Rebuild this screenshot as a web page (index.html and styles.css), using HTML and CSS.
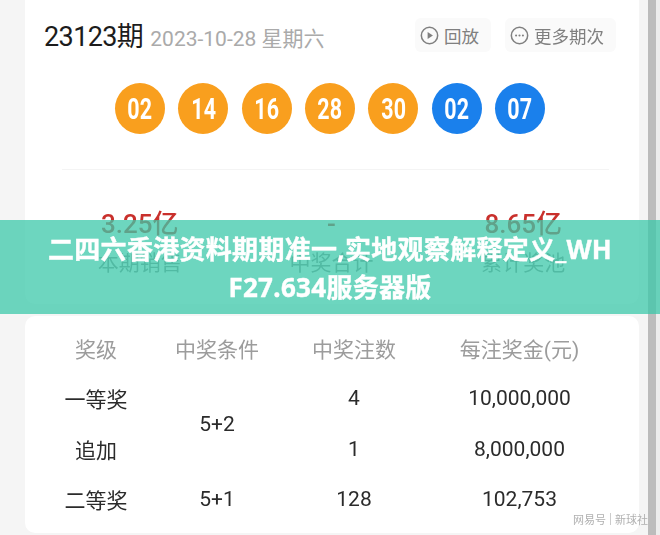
FILE: index.html
```html
<!DOCTYPE html>
<html lang="zh-CN">
<head>
<meta charset="utf-8">
<title>二四六香港资料期期准一</title>
<link rel="stylesheet" href="styles.css">
</head>
<body>
<div class="page">
  <div class="content">
    <section class="card draw">
      <header class="draw-head">
        <div class="draw-title"><span class="issue">23123期</span><span class="date">2023-10-28 星期六</span></div>
        <div class="actions">
          <span class="action">
            <svg class="icon" viewBox="0 0 20 20"><circle cx="10" cy="10" r="8.6"/><path class="fill" d="M8 6.2v7.6l5.6-3.8z"/></svg>回放
          </span>
          <span class="action">
            <svg class="icon" viewBox="0 0 20 20"><circle cx="10" cy="10" r="8.6"/><circle class="fill" cx="6.4" cy="10" r="1.1"/><circle class="fill" cx="10" cy="10" r="1.1"/><circle class="fill" cx="13.6" cy="10" r="1.1"/></svg>更多期次
          </span>
        </div>
      </header>
      <div class="balls">
        <span class="ball orange"><span>02</span></span>
        <span class="ball orange"><span>14</span></span>
        <span class="ball orange"><span>16</span></span>
        <span class="ball orange"><span>28</span></span>
        <span class="ball orange"><span>30</span></span>
        <span class="ball blue"><span>02</span></span>
        <span class="ball blue"><span>07</span></span>
      </div>
      <div class="rule"></div>
      <div class="stats">
        <div class="stat"><b>3.25亿</b><span>本期销售</span></div>
        <div class="stat"><b>-</b><span>中奖合计</span></div>
        <div class="stat"><b>8.65亿</b><span>累计奖池</span></div>
      </div>
    </section>
    <section class="card prizes">
      <div class="cell head">奖级</div>
      <div class="cell head">中奖条件</div>
      <div class="cell head">中奖注数</div>
      <div class="cell head">每注奖金(元)</div>
      <div class="cell">一等奖</div>
      <div class="cell span2">5+2</div>
      <div class="cell">4</div>
      <div class="cell">10,000,000</div>
      <div class="cell">追加</div>
      <div class="cell">1</div>
      <div class="cell">8,000,000</div>
      <div class="cell">二等奖</div>
      <div class="cell">5+1</div>
      <div class="cell">128</div>
      <div class="cell">102,753</div>
    </section>
  </div>
  <div class="scrollbar"></div>
  <h1 class="banner">二四六香港资料期期准一,实地观察解释定义_WHF27.634服务器版</h1>
  <div class="mark"><span>网易号</span><i></i><span>新球社</span></div>
</div>
</body>
</html>
```
FILE: styles.css
```css
* { box-sizing: border-box; }
html, body { margin: 0; padding: 0; }
body {
  width: 660px;
  height: 535px;
  overflow: hidden;
  background: #f5f5f5;
  font-family: Roboto, "Noto Sans CJK SC", sans-serif;
}
.page {
  position: relative;
  width: 660px;
  height: 535px;
  display: flex;
  overflow: hidden;
}
.content {
  flex: 1;
  padding: 0 9px 0 25px;
  display: flex;
  flex-direction: column;
  gap: 12px;
  filter: blur(0.45px);
}
.scrollbar {
  width: 12px;
  border-right: 4px solid #ececec;
  background: #bcbcbc;
}
.card { background: #fff; border-radius: 10px; }
.draw { height: 304px; padding: 0 20px 0 19px; border-radius: 0 0 10px 10px; flex: none; }
.draw-head {
  height: 83px;
  padding-top: 18px;
  display: flex;
  align-items: flex-start;
  justify-content: space-between;
}
.draw-title { display: flex; align-items: baseline; gap: 7px; }
.issue { font-size: 27px; line-height: 38px; color: #1c1c1c; letter-spacing: -0.6px; }
.date { font-size: 21px; color: #aaa; }
.actions { display: flex; gap: 14px; margin-right: 3px; }
.action {
  height: 34px;
  padding: 0 12px 0 5px;
  display: flex;
  align-items: center;
  gap: 5px;
  background: #fafafa;
  border-radius: 6px;
  font-size: 17.5px;
  color: #808080;
}
.icon { width: 19px; height: 19px; fill: none; stroke: #808080; stroke-width: 1.6; }
.icon .fill { fill: #808080; stroke: none; }
.balls {
  display: flex;
  gap: 13.33px;
  padding-left: 71px;
}
.ball {
  width: 50px;
  height: 51px;
  border-radius: 50%;
  display: flex;
  align-items: center;
  justify-content: center;
  color: #fff;
  font-weight: 700;
  font-size: 29px;
}
.ball span { display: block; transform: scaleX(0.74); }
.orange { background: #f99f1e; }
.blue { background: #1a80ec; }
.rule { margin: 35px 10px 0 18px; height: 1px; background: #f4f4f4; }
.stats {
  display: grid;
  grid-template-columns: 1fr 1fr 1fr;
  padding-top: 38px;
}
.stat { display: flex; flex-direction: column; align-items: center; }
.stat b { font-weight: 500; font-size: 26px; line-height: 32px; color: #c9302c; }
.stat span { font-size: 21px; line-height: 46px; color: #909090; }
.prizes {
  flex: 1;
  margin-bottom: 2px;
  display: grid;
  grid-template-columns: 142px 100px 174px 157px;
  grid-template-rows: 50px 50px 51px 50px;
  padding-top: 7px;
  align-content: start;
}
.cell {
  display: flex;
  align-items: center;
  justify-content: center;
  font-size: 21px;
  color: #2b2b2b;
}
.head { color: #9c9c9c; }
.span2 { grid-row: span 2; }
.banner {
  position: absolute;
  left: 0;
  top: 220px;
  width: 660px;
  height: 94px;
  margin: 0;
  padding: 10px 45px 0;
  background: rgba(60, 200, 169, 0.75);
  color: #fff;
  font-family: "Noto Sans", "Noto Sans CJK SC", sans-serif;
  font-weight: 700;
  font-size: 26px;
  line-height: 38px;
  letter-spacing: 0.3px;
  text-align: center;
  word-break: break-all;
  -webkit-text-stroke: 0.4px #fff;
}
.mark {
  position: absolute;
  right: 12px;
  bottom: 8px;
  display: flex;
  align-items: center;
  gap: 4px;
  font-size: 11px;
  color: #b0b0b0;
  filter: blur(0.4px);
}
.mark i { width: 1px; height: 12px; background: #cccccc; }
```
